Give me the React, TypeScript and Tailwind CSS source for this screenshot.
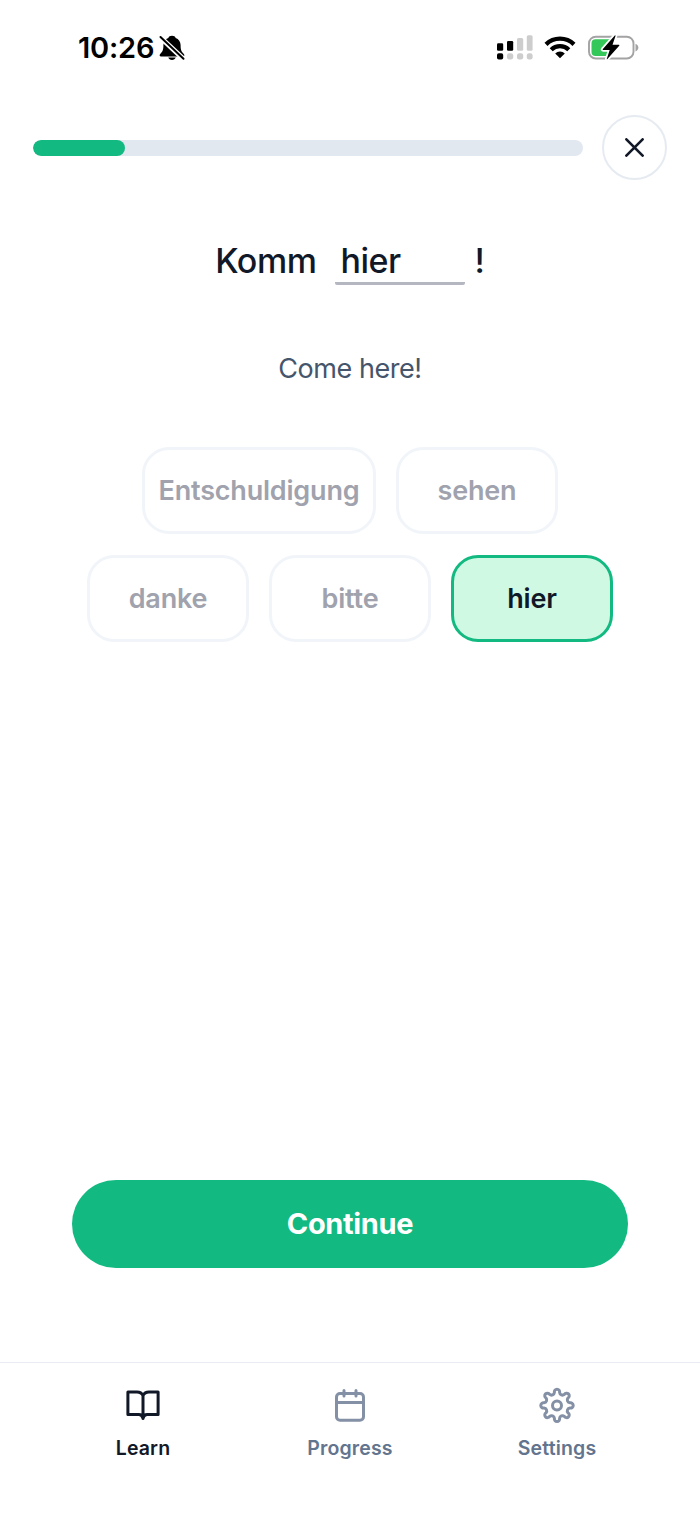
import React from "react";
import clsx from "clsx";

const words = [["Entschuldigung", "sehen"], ["danke", "bitte", "hier"]];

interface WordButtonProps {
  word: string;
  selected: boolean;
}

function WordButton({ word, selected }: WordButtonProps) {
  return (
    <button
      className={clsx(
        "flex h-[87px] min-w-[162px] items-center justify-center rounded-[27px] border-[3px] pt-[2px] text-[27px] font-semibold",
        word === "Entschuldigung" && "w-[234px]",
        selected
          ? "border-[#12b981] bg-[#d0f9e4] text-[#111827]"
          : "border-slate-100 text-[#a0a2ad]"
      )}
    >
      <span className="tracking-[-0.2px]">{word}</span>
    </button>
  );
}

function StatusBar() {
  return (
    <div className="flex h-[95px] items-center justify-between pl-[78px] pr-[61px] text-black">
      <div className="flex items-center gap-[5px]">
        <span className="text-[29px] font-semibold leading-[36px] tracking-[-0.2px]">
          10:26
        </span>
        <svg width="26" height="26" viewBox="0 0 26 26">
          <path
            d="M13 .8c-2 0-3.200.9-3.700 2.200C6.300 4.100 4.400 6.800 4.400 10c0 4.600-.6 6.200-2.600 8.200-1.800 1.800-1.500 3.200.4 3.200h21.600c1.900 0 2.200-1.400.4-3.200-2-2-2.600-3.600-2.600-8.200 0-3.200-1.900-5.900-4.900-7C16.200 1.700 15 .8 13 .8Z"
            fill="currentColor"
          />
          <path d="M9.300 22.600h7.400c-.5 1.600-1.900 2.500-3.700 2.500s-3.200-.9-3.700-2.500Z" fill="currentColor" />
          <path d="M0 1 25.500 25" stroke="white" strokeWidth="5" />
          <path d="M1.500 2 24.500 23.700" stroke="currentColor" strokeWidth="2" strokeLinecap="round" />
        </svg>
      </div>

      <div className="flex items-center">
        <svg width="36" height="26" viewBox="0 0 36 26">
          <g fill="currentColor">
            <rect x="0" y="8.300" width="6.200" height="7.400" rx="1.300" />
            <rect x="10" y="6" width="6.200" height="9.700" rx="1.300" />
            <rect x="0" y="18.200" width="6.200" height="6.300" rx="1.800" />
          </g>
          <g fill="#cdcdcd">
            <rect x="20" y="3" width="6.200" height="12.700" rx="1.500" />
            <rect x="29.800" y=".3" width="5.800" height="15.400" rx="1.500" />
            <rect x="10" y="18.200" width="6.200" height="6.300" rx="2.200" />
            <rect x="20" y="18.200" width="6.200" height="6.300" rx="2.200" />
            <rect x="29.800" y="18.200" width="5.800" height="6.300" rx="2.200" />
          </g>
        </svg>
        <svg className="ml-[11px]" width="32" height="24" viewBox="0 0 32 24">
          <g fill="none" stroke="currentColor" strokeWidth="4.300">
            <path d="M2 8.400a20 20 0 0 1 28 0" />
            <path d="M7.200 13.700a12.600 12.600 0 0 1 17.600 0" />
          </g>
          <path d="M16 22.300 11.200 17.600a6.800 6.800 0 0 1 9.600 0Z" fill="currentColor" />
        </svg>
        <svg className="ml-[12px]" width="51" height="28" viewBox="0 0 51 28">
          <rect x="1" y="2.700" width="44.500" height="21.800" rx="6.800" fill="none" stroke="#a3a3a3" strokeWidth="1.900" />
          <path d="M47.500 9.700c3.800 1.200 3.800 6.500 0 7.800Z" fill="#a3a3a3" />
          <path d="M7.500 5.200H22v16.800H7.500a4 4 0 0 1-4-4V9.200a4 4 0 0 1 4-4Z" fill="#34c759" />
          <path
            d="M26.800 1.500 14.900 14.900q-.8 1.100.4 1.100h6.400l-2.900 8.700q-.2 1 .6.400L31.200 11.800q.7-1-.4-1h-6.300l3-8.900q.1-1-.7-.4Z"
            fill="currentColor"
            stroke="white"
            strokeWidth="3.600"
            strokeLinejoin="round"
            paintOrder="stroke"
          />
        </svg>
      </div>
    </div>
  );
}

function LessonHeader() {
  return (
    <header className="mt-[20px] flex h-[66px] items-start gap-[19px] px-[33px]">
      <div className="mt-[25px] h-[16px] flex-1 overflow-hidden rounded-full bg-slate-200">
        <div className="h-full w-[92px] rounded-full bg-[#12b981]" />
      </div>
      <button className="flex size-[65px] items-center justify-center rounded-full border-2 border-[#e6ebf2]">
        <svg width="19" height="19" viewBox="0 0 18 18" fill="none">
          <path d="m1.300 1.300 15.400 15.400M16.700 1.300 1.300 16.700" stroke="#111827" strokeWidth="2.500" strokeLinecap="round" />
        </svg>
      </button>
    </header>
  );
}

interface TabProps {
  label: string;
  active?: boolean;
  children: React.ReactNode;
}

function Tab({ label, active, children }: TabProps) {
  return (
    <button
      className={clsx(
        "flex w-[207px] flex-col items-center text-[19.500px] font-semibold",
        active ? "text-[#111827]" : "text-slate-500"
      )}
    >
      <svg
        className={clsx(!active && "text-[#8490a5]")}
        width="40"
        height="40"
        viewBox="0 0 40 40"
        fill="none"
        stroke="currentColor"
        strokeWidth="3"
        strokeLinejoin="round"
        strokeLinecap="round"
      >
        {children}
      </svg>
      <span className="mt-[10px] leading-[26px] tracking-[0.15px]">{label}</span>
    </button>
  );
}

function BottomTabs() {
  return (
    <nav className="flex h-[153px] items-start justify-center border-t border-[#e9edf3] pt-[22px]">
      <Tab label="Learn" active>
        <path d="M20 10.500C18.800 8 17 6.900 14 6.900H4.900v22.600h11c2.200 0 3.300.8 4.100 3.800.8-3 1.900-3.800 4.100-3.800h11V6.900H26c-3 0-4.800 1.100-6 3.600ZM20 10.500V33.500" />
      </Tab>
      <Tab label="Progress">
        <rect x="6.500" y="8.500" width="27" height="26.700" rx="3.500" />
        <path d="M6.500 17.500h27M14 5.500v5.500M26 5.500v5.500" />
      </Tab>
      <Tab label="Settings">
        <g transform="translate(20 20.4)">
          <path d="M-2.575-12.946A2.650 2.650 0 1 1 2.575-12.946A2.900 2.900 0 0 0 7.334-10.975A2.650 2.650 0 1 1 10.975-7.334A2.900 2.900 0 0 0 12.946-2.575A2.650 2.650 0 1 1 12.946 2.575A2.900 2.900 0 0 0 10.975 7.334A2.650 2.650 0 1 1 7.334 10.975A2.900 2.900 0 0 0 2.575 12.946A2.650 2.650 0 1 1-2.575 12.946A2.900 2.900 0 0 0-7.334 10.975A2.650 2.650 0 1 1-10.975 7.334A2.900 2.900 0 0 0-12.946 2.575A2.650 2.650 0 1 1-12.946-2.575A2.900 2.900 0 0 0-10.975-7.334A2.650 2.650 0 1 1-7.334-10.975A2.900 2.900 0 0 0-2.575-12.946Z" />
          <circle r="4.500" />
        </g>
      </Tab>
    </nav>
  );
}

export default function App() {
  return (
    <div className="flex h-[1515px] w-[700px] flex-col bg-white font-['Inter',sans-serif]">
      <StatusBar />
      <LessonHeader />

      <main className="flex flex-1 flex-col items-center">
        <h1 className="mt-[58px] flex h-[46px] items-start text-[34px] font-medium leading-[44px] text-[#111827]">
          <span className="tracking-[-0.4px]">Komm</span>
          <span className="ml-[18px] h-[46px] w-[130px] rounded-[2px] border-b-[3px] border-[#b5b7c0] pl-[6px] tracking-[-0.5px]">
            hier
          </span>
          <span className="ml-[10px]">!</span>
        </h1>
        <p className="mt-[66px] text-[27px] leading-[36px] tracking-[-0.45px] text-slate-600">
          Come here!
        </p>

        <div className="mt-[60px] flex flex-col items-center gap-[21px]">
          {words.map((row, i) => (
            <div key={i} className="flex gap-[20px]">
              {row.map((word) => (
                <WordButton key={word} word={word} selected={word === "hier"} />
              ))}
            </div>
          ))}
        </div>

        <button className="mb-[94px] mt-auto h-[88px] w-[556px] rounded-full bg-[#12b981] text-[29px] font-bold tracking-[-0.35px] text-white">
          Continue
        </button>
      </main>

      <BottomTabs />
    </div>
  );
}
